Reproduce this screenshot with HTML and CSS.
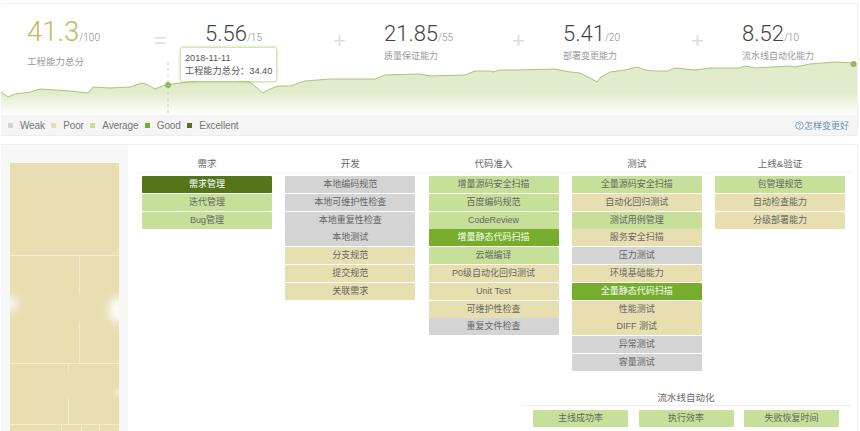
FILE: index.html

```html
<!DOCTYPE html>
<html lang="en">

<head>
    <meta charset="UTF-8">
    <meta name="viewport" content="width=device-width, initial-scale=1.0">
    <title>工程能力</title>
    <link rel="stylesheet" href="styles.css">
</head>

<body>
    <div class="score-card">
        <svg class="trend" width="857" height="112" viewBox="0 0 857 112">
            <defs>
                <linearGradient id="trend-fill" x1="0" y1="0" x2="0" y2="1">
                    <stop offset="0.55" stop-color="#b9d48a" stop-opacity="0.45"/>
                    <stop offset="1" stop-color="#b9d48a" stop-opacity="0.02"/>
                </linearGradient>
            </defs>
            <path fill="url(#trend-fill)" d="M0 89 L7 94 L14 91 L29 89 L39 86 L69 88 L87 90 L92 84 L109 85 L129 84 L141 80 L147 82 L154 86 L164 82 L179 80 L199 78 L234 78 L249 79 L255 84 L262 90 L269 86 L277 83 L289 83 L304 78 L329 76 L374 76 L384 72 L419 71 L429 73 L464 72 L474 68 L489 68 L492 69 L499 67 L519 67 L554 66 L569 69 L579 70 L589 75 L596 79 L599 75 L609 69 L624 67 L636 64 L644 67 L654 68 L667 68 L674 65 L694 67 L709 65 L739 65 L744 63 L754 65 L789 63 L794 64 L809 61 L834 59 L852 60 L856 60 L856 112 L0 112 Z"/>
            <path fill="none" stroke="#a9c57a" stroke-width="1" d="M0 89 L7 94 L14 91 L29 89 L39 86 L69 88 L87 90 L92 84 L109 85 L129 84 L141 80 L147 82 L154 86 L164 82 L179 80 L199 78 L234 78 L249 79 L255 84 L262 90 L269 86 L277 83 L289 83 L304 78 L329 76 L374 76 L384 72 L419 71 L429 73 L464 72 L474 68 L489 68 L492 69 L499 67 L519 67 L554 66 L569 69 L579 70 L589 75 L596 79 L599 75 L609 69 L624 67 L636 64 L644 67 L654 68 L667 68 L674 65 L694 67 L709 65 L739 65 L744 63 L754 65 L789 63 L794 64 L809 61 L834 59 L852 60"/>
            <line x1="167" y1="59" x2="167" y2="112" stroke="#ccc" stroke-dasharray="3 3"/>
            <circle cx="167" cy="82" r="3" fill="#94b85a"/>
            <circle cx="852.5" cy="61" r="3" fill="#94b85a"/>
        </svg>

        <div class="stats">
            <div class="stat stat-total">
                <div class="stat-num"><b>41.3</b><span>/100</span></div>
                <div class="stat-label">工程能力总分</div>
            </div>
            <div class="op">=</div>
            <div class="stat">
                <div class="stat-num"><b>5.56</b><span>/15</span></div>
                <div class="stat-label"></div>
            </div>
            <div class="op">+</div>
            <div class="stat">
                <div class="stat-num"><b>21.85</b><span>/55</span></div>
                <div class="stat-label">质量保证能力</div>
            </div>
            <div class="op">+</div>
            <div class="stat">
                <div class="stat-num"><b>5.41</b><span>/20</span></div>
                <div class="stat-label">部署变更能力</div>
            </div>
            <div class="op">+</div>
            <div class="stat">
                <div class="stat-num"><b>8.52</b><span>/10</span></div>
                <div class="stat-label">流水线自动化能力</div>
            </div>
        </div>

        <div class="tip">
            <div>2018-11-11</div>
            <div>工程能力总分：34.40</div>
        </div>

        <div class="legend">
            <span class="legend-item"><i class="weak"></i>Weak</span>
            <span class="legend-item"><i class="poor"></i>Poor</span>
            <span class="legend-item"><i class="average"></i>Average</span>
            <span class="legend-item"><i class="good"></i>Good</span>
            <span class="legend-item"><i class="excellent"></i>Excellent</span>
            <a class="better-link" href="#">
                <svg width="9" height="9" viewBox="0 0 9 9">
                    <circle cx="4.5" cy="4.5" r="3.8" fill="none" stroke="#6f90bd" stroke-width="0.8"/>
                    <path d="M3.3 3.6 C3.3 2.2 5.7 2.2 5.7 3.6 C5.7 4.5 4.5 4.4 4.5 5.5" fill="none" stroke="#6f90bd" stroke-width="0.8"/>
                    <circle cx="4.5" cy="6.7" r="0.5" fill="#6f90bd"/>
                </svg>怎样变更好</a>
        </div>
    </div>

    <div class="panel">
        <div class="side">
            <div class="treemap">
                <div class="tree-row row-a"><div class="cell"></div></div>
                <div class="tree-row row-b"><div class="cell w-69"></div><div class="cell"></div></div>
                <div class="tree-row row-c"><div class="cell w-58"></div><div class="cell"></div></div>
                <div class="tree-row row-d">
                    <div class="cell w-51"></div><div class="cell w-20"></div><div class="cell w-18"></div><div class="cell"></div>
                </div>
                <span class="glow glow-1"></span>
                <span class="glow glow-2"></span>
                <span class="glow glow-3"></span>
                <span class="smudge smudge-1"></span>
                <span class="smudge smudge-2"></span>
            </div>
        </div>

        <div class="stages">
            <div class="stage-heads">
                <div>需求</div>
                <div>开发</div>
                <div>代码准入</div>
                <div>测试</div>
                <div>上线&amp;验证</div>
            </div>
            <div class="stage-cols">
                <div class="stage">
                    <div class="item excellent">需求管理</div>
                    <div class="item average">迭代管理</div>
                    <div class="item average">Bug管理</div>
                </div>
                <div class="stage">
                    <div class="item weak">本地编码规范</div>
                    <div class="item weak">本地可维护性检查</div>
                    <div class="item weak">本地重复性检查</div>
                    <div class="item weak">本地测试</div>
                    <div class="item poor">分支规范</div>
                    <div class="item poor">提交规范</div>
                    <div class="item poor">关联需求</div>
                </div>
                <div class="stage">
                    <div class="item average">增量源码安全扫描</div>
                    <div class="item average">百度编码规范</div>
                    <div class="item average">CodeReview</div>
                    <div class="item good">增量静态代码扫描</div>
                    <div class="item average">云端编译</div>
                    <div class="item poor">P0级自动化回归测试</div>
                    <div class="item poor">Unit Test</div>
                    <div class="item poor">可维护性检查</div>
                    <div class="item weak">重复文件检查</div>
                </div>
                <div class="stage">
                    <div class="item average">全量源码安全扫描</div>
                    <div class="item poor">自动化回归测试</div>
                    <div class="item average">测试用例管理</div>
                    <div class="item poor">服务安全扫描</div>
                    <div class="item weak">压力测试</div>
                    <div class="item poor">环境基础能力</div>
                    <div class="item good">全量静态代码扫描</div>
                    <div class="item poor">性能测试</div>
                    <div class="item poor">DIFF 测试</div>
                    <div class="item weak">异常测试</div>
                    <div class="item weak">容量测试</div>
                </div>
                <div class="stage">
                    <div class="item average">包管理规范</div>
                    <div class="item poor">自动检查能力</div>
                    <div class="item poor">分级部署能力</div>
                </div>
            </div>

            <div class="pipeline">
                <div class="pipeline-title">流水线自动化</div>
                <div class="pipeline-items">
                    <div class="item average">主线成功率</div>
                    <div class="item average">执行效率</div>
                    <div class="item average">失败恢复时间</div>
                </div>
            </div>
        </div>
    </div>
</body>

</html>
```

FILE: styles.css

```css
html, body {
    height: 431px;
    overflow: hidden;
}

body {
    margin: 0;
    background-color: white;
    font-family: "Liberation Sans", "Noto Sans CJK SC", sans-serif;
    color: #666;
}

/* top card */
.score-card {
    position: relative;
    width: 857px;
    height: 132px;
    margin: 3px 0 0 1px;
    border-top: 1px solid #f0f0f0;
    border-right: 1px solid #eee;
    box-sizing: border-box;
}

.trend {
    position: absolute;
    left: 0;
    top: -1px;
}

.stats {
    position: relative;
    display: flex;
    padding: 12px 0 0 26px;
}

.stat {
    flex: 0 0 128px;
}

.stat-total {
    flex: 0 0 127px;
}

.stat-num {
    height: 31px;
    margin-top: 2px;
    line-height: 31px;
    white-space: nowrap;
    font-family: Roboto, "Liberation Sans", sans-serif;
    font-weight: 300;
}

.stat-num b {
    font-weight: 300;
    font-size: 22px;
    color: #444;
}

.stat-num span {
    font-size: 10px;
    color: #888;
}

.stat-label {
    margin-top: 0;
    font-size: 9px;
    line-height: 14px;
    color: #999;
}

.stat-total .stat-num {
    margin-top: 0;
}

.stat-total .stat-num b {
    font-size: 27.5px;
    color: #cdb45c;
}

.stat-total .stat-label {
    margin-top: 8px;
    font-size: 9.5px;
}

.op {
    flex: 0 0 51px;
    margin-top: 13px;
    font-size: 22px;
    line-height: 24px;
    color: #ddd;
}

.tip {
    position: absolute;
    left: 180px;
    top: 44px;
    padding: 4px 4px 3px 4px;
    background-color: white;
    border-radius: 2px;
    box-shadow: 0 0 3px 1px rgba(160, 200, 100, 0.7);
    font-size: 9.2px;
    line-height: 13px;
    white-space: nowrap;
    color: #555;
}

.legend {
    position: absolute;
    left: 0;
    right: 0;
    top: 111px;
    height: 20px;
    display: flex;
    align-items: center;
    padding-left: 7px;
    background-color: #f5f5f5;
    border-bottom: 1px solid #eee;
    font-size: 10px;
    letter-spacing: -0.15px;
    color: #777;
}

.legend-item {
    display: flex;
    align-items: center;
    margin-right: 6.5px;
}

.legend-item i {
    width: 5px;
    height: 5px;
    margin-right: 7px;
}

.better-link {
    display: flex;
    align-items: center;
    margin-left: auto;
    margin-right: 8px;
    font-size: 9px;
    letter-spacing: 0;
    color: #6f90bd;
    text-decoration: none;
}

/* level colours */
.weak { background-color: #d4d4d4; }
.poor { background-color: #e8dfb0; }
.average { background-color: #c6e09a; }
.good { background-color: #76ad2c; color: white; }
.excellent { background-color: #54751a; color: white; }

/* bottom panel */
.panel {
    display: flex;
    width: 857px;
    height: 287px;
    margin: 9px 0 0 1px;
    border-top: 1px solid #eee;
    border-right: 1px solid #eee;
    box-sizing: border-box;
    overflow: hidden;
}

.side {
    width: 127px;
    height: 286px;
    flex-shrink: 0;
    padding: 18px 9px 0 9px;
    box-sizing: border-box;
    background-color: #f7f7f7;
    overflow: hidden;
}

.treemap {
    position: relative;
    display: flex;
    flex-direction: column;
    gap: 1px;
    height: 268px;
    background-color: #f3edd0;
    overflow: hidden;
}

.tree-row {
    display: flex;
    flex-shrink: 0;
    gap: 1px;
}

.row-a { height: 92px; }
.row-b { height: 107px; }
.row-c { height: 60px; }
.row-d { height: 30px; }

.cell {
    flex: 1;
    background-color: #e7dfb1;
}

.w-69 { flex: 0 0 68.5px; }
.w-58 { flex: 0 0 58px; }
.w-51 { flex: 0 0 51px; }
.w-20 { flex: 0 0 19px; }
.w-18 { flex: 0 0 17px; }

.glow {
    position: absolute;
    border-radius: 50%;
    background-color: white;
    filter: blur(4px);
}

.glow-1 { left: -6px; top: 133px; width: 13px; height: 16px; opacity: 0.8; }
.glow-2 { right: -8px; top: 134px; width: 18px; height: 26px; opacity: 0.95; }
.glow-3 { right: -1px; top: 227px; width: 5px; height: 5px; opacity: 0.9; filter: blur(2px); }

/* blur patches over the cell lines */
.smudge {
    position: absolute;
    width: 10px;
    background-color: #e7dfb1;
    filter: blur(2px);
}

.smudge-1 { left: 64px; top: 132px; height: 26px; }
.smudge-2 { left: 53px; top: 209px; height: 26px; }

.stages {
    flex: 1;
    padding: 11px 6px 0 7px;
}

.stage-heads,
.stage-cols {
    display: grid;
    grid-template-columns: repeat(5, 130px);
    column-gap: 13.25px;
    padding-left: 7px;
}

.stage-heads {
    height: 16px;
    border-bottom: 1px solid #f3f3f3;
    font-size: 9.5px;
    line-height: 15px;
    text-align: center;
    color: #666;
}

.stage-cols {
    padding-top: 3px;
}

.item {
    height: 17px;
    margin-bottom: 0.8px;
    border-radius: 1px;
    font-size: 9px;
    line-height: 17px;
    text-align: center;
}

.pipeline {
    margin: 19px 0 0 386px;
}

.pipeline-title {
    height: 14px;
    border-bottom: 1px solid #eee;
    font-size: 9.5px;
    line-height: 13px;
    text-align: center;
}

.pipeline-items {
    display: flex;
    justify-content: space-between;
    padding: 4px 12px 0 12px;
}

.pipeline-items .item {
    width: 95px;
}
```
